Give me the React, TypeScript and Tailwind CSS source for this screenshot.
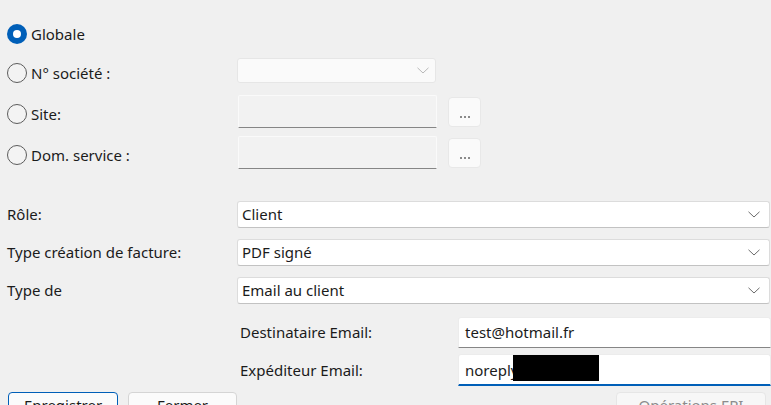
import React from 'react';

const font = { fontFamily: '"Noto Sans", "Open Sans", sans-serif' };

const Radio = ({ checked, label }: { checked?: boolean; label: string }) => (
  <div className="flex items-center h-[20px]">
    {checked ? (
      <span className="w-[20px] h-[20px] rounded-full bg-[#005fb8] flex items-center justify-center">
        <span className="w-[8px] h-[8px] rounded-full bg-white" />
      </span>
    ) : (
      <span className="w-[20px] h-[20px] rounded-full border border-[#5c5c5c] bg-[#f3f3f3]" />
    )}
    <span className="ml-[4px] text-[15px] text-[#1b1b1b]">{label}</span>
  </div>
);

const Chevron = ({ light }: { light?: boolean }) => (
  <svg width="12" height="7" viewBox="0 0 12 7" className="shrink-0">
    <path d="M0.5 0.8 L6 6 L11.5 0.8" fill="none" stroke={light ? '#b8b8b8' : '#6b6b6b'} strokeWidth="1" />
  </svg>
);

const Combo = ({ value }: { value: string }) => (
  <div className="w-[533px] h-[27px] bg-white border border-[#dcdcdc] border-b-[#c2c2c2] rounded-[3px] flex items-center justify-between pl-[4px] pr-[9px]">
    <span className="text-[15px] text-[#1b1b1b]">{value}</span>
    <Chevron />
  </div>
);

const DotsButton = () => (
  <div className="w-[33px] h-[30px] ml-[11px] mt-[2px] rounded-[4px] bg-[#fafafa] border border-[#e8e8e8] flex items-end justify-center pb-[8px]">
    <span className="flex gap-[2px]">
      <span className="w-[2px] h-[2px] bg-[#8a8a8a]" />
      <span className="w-[2px] h-[2px] bg-[#8a8a8a]" />
      <span className="w-[2px] h-[2px] bg-[#8a8a8a]" />
    </span>
  </div>
);

const DisabledBox = () => (
  <div className="w-[199px] h-[33px] bg-[#f2f2f2] border border-[#fafafa] border-b-[#868686] rounded-t-[2px]" />
);

export default function App() {
  return (
    <div className="w-[771px] h-[405px] bg-[#f0f0f0] overflow-hidden" style={font}>
      <div className="pl-[7px] pt-[24px]">
        <Radio checked label="Globale" />

        <div className="flex mt-[14px]">
          <div className="w-[230px] pt-[5px]">
            <Radio label="N° société :" />
          </div>
          <div className="w-[199px] h-[25px] bg-[#fafafa] border border-[#e6e6e6] rounded-[3px] flex items-center justify-end pr-[6px]">
            <Chevron light />
          </div>
        </div>

        <div className="flex mt-[12px]">
          <div className="w-[231px] pt-[9px]">
            <Radio label="Site:" />
          </div>
          <DisabledBox />
          <DotsButton />
        </div>

        <div className="flex mt-[8px]">
          <div className="w-[231px] pt-[9px]">
            <Radio label="Dom. service :" />
          </div>
          <DisabledBox />
          <DotsButton />
        </div>

        <div className="flex flex-col gap-[11px] mt-[32px]">
          <div className="flex items-center">
            <span className="w-[230px] text-[15px] text-[#1b1b1b]">Rôle:</span>
            <Combo value="Client" />
          </div>
          <div className="flex items-center">
            <span className="w-[230px] text-[15px] text-[#1b1b1b]">Type création de facture:</span>
            <Combo value="PDF signé" />
          </div>
          <div className="flex items-center">
            <span className="w-[230px] text-[15px] text-[#1b1b1b]">Type de</span>
            <Combo value="Email au client" />
          </div>
        </div>

        <div className="flex flex-col gap-[6px] mt-[13px] pl-[233px]">
          <div className="flex items-center">
            <span className="w-[218px] text-[15px] text-[#1b1b1b]">Destinataire Email:</span>
            <div className="w-[313px] h-[31px] bg-white border border-[#ececec] border-b-[#868686] rounded-t-[3px] flex items-center pl-[6px]">
              <span className="text-[15px] text-[#1b1b1b]">test@hotmail.fr</span>
            </div>
          </div>
          <div className="flex items-center">
            <span className="w-[218px] text-[15px] text-[#1b1b1b]">Expéditeur Email:</span>
            <div className="w-[313px] h-[32px] bg-white border border-[#ececec] border-b-2 border-b-[#005fb8] rounded-t-[3px] flex items-start pl-[6px]">
              <span className="text-[15px] text-[#1b1b1b] mt-[4px]">noreply</span>
              <span className="w-[86px] h-[26px] bg-black ml-[-5px]" />
            </div>
          </div>
        </div>

        <div className="flex mt-[6px] pl-[1px]">
          <div className="w-[110px] h-[32px] rounded-[4px] bg-[#fbfbfb] border border-[#005fb8] flex justify-center pt-[1px] text-[15px] text-[#1b1b1b]">
            Enregistrer
          </div>
          <div className="w-[109px] h-[32px] ml-[10px] rounded-[4px] bg-[#fbfbfb] border border-[#d5d5d5] flex justify-center pt-[1px] text-[15px] text-[#1b1b1b]">
            Fermer
          </div>
          <div className="w-[150px] h-[32px] ml-[379px] rounded-[4px] bg-[#f7f7f7] border border-[#e6e6e6] flex justify-center pt-[1px] text-[15px] text-[#8c8c8c]">
            Opérations EPI
          </div>
        </div>
      </div>
    </div>
  );
}
